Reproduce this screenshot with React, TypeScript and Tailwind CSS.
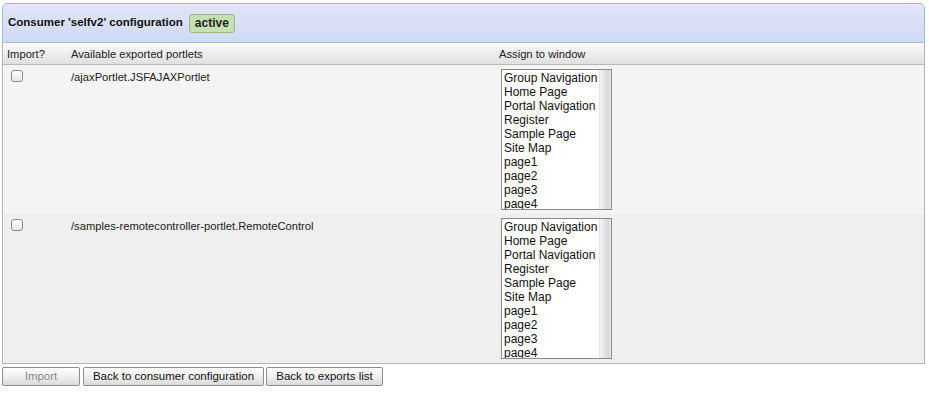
import React from "react";

const pages = [
  "Group Navigation",
  "Home Page",
  "Portal Navigation",
  "Register",
  "Sample Page",
  "Site Map",
  "page1",
  "page2",
  "page3",
  "page4",
];

function ListBox() {
  return (
    <div className="flex h-[141px] w-[111px] border border-[#8a8a8a] bg-white overflow-hidden">
      <div className="flex-1 pl-[2px] pt-[1px] text-[12px] leading-[14px] text-[#111] [font-family:'Liberation_Sans',Arial,sans-serif]">
        {pages.map((p) => (
          <div key={p} className="whitespace-nowrap">
            {p}
          </div>
        ))}
      </div>
      <div className="w-[12px] h-full border-l border-[#e4e4e4] bg-[linear-gradient(to_right,#f2f2f2,#e6e6e6_40%,#d6d6d6_75%,#ececec)]" />
    </div>
  );
}

function Checkbox() {
  return (
    <div className="w-[12px] h-[12px] rounded-[3px] border border-[#8c8c8c] bg-[linear-gradient(to_bottom,#ffffff,#e8e8e8)] shadow-[inset_0_1px_0_#fff]" />
  );
}

function Row({ name, bg }: { name: string; bg: string }) {
  return (
    <div className={`flex ${bg} h-[149px]`}>
      <div className="w-[68px] pl-[8px] pt-[5px]">
        <Checkbox />
      </div>
      <div className="w-[428px] pt-[5px] text-[11.2px] leading-[14px] text-[#222]">
        {name}
      </div>
      <div className="pt-[4px] pl-[2px]">
        <ListBox />
      </div>
    </div>
  );
}

function Btn({
  children,
  disabled,
  w,
}: {
  children: React.ReactNode;
  disabled?: boolean;
  w: string;
}) {
  return (
    <button
      className={`${w} h-[19px] text-[11.5px] leading-[17px] text-center rounded-[2px] border border-[#8d8d8d] bg-[linear-gradient(to_bottom,#fdfdfd,#f0f0f0_50%,#dadada)] ${
        disabled ? "text-[#8a8a8a]" : "text-[#111]"
      }`}
    >
      {children}
    </button>
  );
}

export default function App() {
  return (
    <div className="min-h-[393px] w-[929px] bg-white [font-family:'Liberation_Sans',Arial,sans-serif] text-[11px]">
      <div className="pl-[2px] pt-[3px] w-[925px]">
        <div className="h-[40px] rounded-t-[5px] border border-[#9dbdd8] bg-[linear-gradient(to_bottom,#e2e6f7,#d0d9f5)] flex items-center pl-[5px] gap-[6px]">
          <span className="font-bold text-[11.5px] text-[#111]">
            Consumer 'selfv2' configuration
          </span>
          <span className="h-[19px] px-[5px] rounded-[3px] border border-[#9ab68a] bg-[#c6e0b4] font-bold text-[12px] leading-[17px] text-[#1a2a10]">
            active
          </span>
        </div>
        <div className="border-l border-r border-b border-[#b4b4b4]">
          <div className="flex h-[22px] items-center pt-[2px] border-b border-[#b9b9b9] bg-[linear-gradient(to_bottom,#fbfbfb,#e0e0e0)] text-[11.2px] text-[#222]">
            <div className="w-[68px] pl-[4px]">Import?</div>
            <div className="w-[428px]">Available exported portlets</div>
            <div>Assign to window</div>
          </div>
          <Row name="/ajaxPortlet.JSFAJAXPortlet" bg="bg-[#f4f4f4]" />
          <Row name="/samples-remotecontroller-portlet.RemoteControl" bg="bg-[#efefef]" />
        </div>
        <div className="flex pt-[3px]">
          <Btn disabled w="w-[78px]">
            Import
          </Btn>
          <div className="ml-[3px]">
            <Btn w="w-[181px]">Back to consumer configuration</Btn>
          </div>
          <div className="ml-[2px]">
            <Btn w="w-[117px]">Back to exports list</Btn>
          </div>
        </div>
      </div>
    </div>
  );
}
